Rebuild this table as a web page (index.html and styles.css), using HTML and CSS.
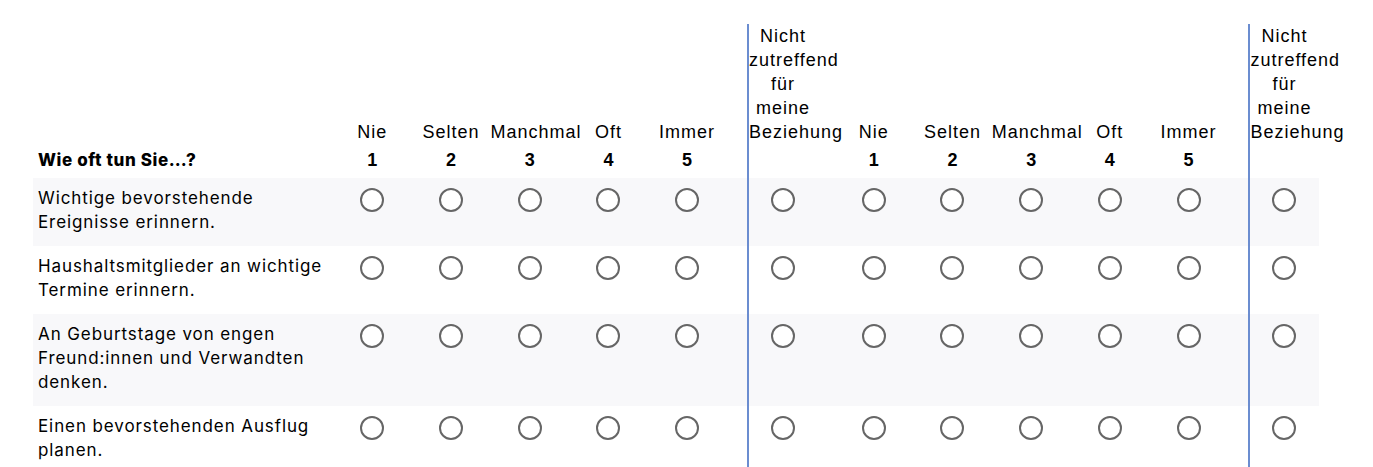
FILE: index.html
```html
<!DOCTYPE html>
<html lang="de">
<head>
<meta charset="utf-8">
<title>Wie oft tun Sie…?</title>
<link rel="stylesheet" href="styles.css">
</head>
<body>
<div class="page">
<table class="matrix">
  <colgroup>
    <col class="c-q">
    <col class="c-opt"><col class="c-opt"><col class="c-opt"><col class="c-opt"><col class="c-opt">
    <col class="c-gap">
    <col class="c-na">
    <col class="c-sep">
    <col class="c-opt"><col class="c-opt"><col class="c-opt"><col class="c-opt"><col class="c-opt">
    <col class="c-gap">
    <col class="c-na">
  </colgroup>
  <thead>
    <tr>
      <th class="q-head">Wie oft tun Sie…?</th>
      <th class="opt-head"><div class="lbl">Nie</div><div class="num">1</div></th>
      <th class="opt-head"><div class="lbl">Selten</div><div class="num">2</div></th>
      <th class="opt-head"><div class="lbl">Manchmal</div><div class="num">3</div></th>
      <th class="opt-head"><div class="lbl">Oft</div><div class="num">4</div></th>
      <th class="opt-head"><div class="lbl">Immer</div><div class="num">5</div></th>
      <th class="gap"></th>
      <th class="opt-head na"><div class="lbl">Nicht zutreffend für meine Beziehung</div><div class="num">&nbsp;</div></th>
      <th class="sep"></th>
      <th class="opt-head"><div class="lbl">Nie</div><div class="num">1</div></th>
      <th class="opt-head"><div class="lbl">Selten</div><div class="num">2</div></th>
      <th class="opt-head"><div class="lbl">Manchmal</div><div class="num">3</div></th>
      <th class="opt-head"><div class="lbl">Oft</div><div class="num">4</div></th>
      <th class="opt-head"><div class="lbl">Immer</div><div class="num">5</div></th>
      <th class="gap"></th>
      <th class="opt-head na"><div class="lbl">Nicht zutreffend für meine Beziehung</div><div class="num">&nbsp;</div></th>
    </tr>
  </thead>
  <tbody>
    <tr class="alt">
      <td class="q">Wichtige bevorstehende Ereignisse erinnern.</td>
      <td class="r"><input type="radio" name="a1"></td>
      <td class="r"><input type="radio" name="a1"></td>
      <td class="r"><input type="radio" name="a1"></td>
      <td class="r"><input type="radio" name="a1"></td>
      <td class="r"><input type="radio" name="a1"></td>
      <td class="gap"></td>
      <td class="r na"><input type="radio" name="a1"></td>
      <td class="sep"></td>
      <td class="r"><input type="radio" name="b1"></td>
      <td class="r"><input type="radio" name="b1"></td>
      <td class="r"><input type="radio" name="b1"></td>
      <td class="r"><input type="radio" name="b1"></td>
      <td class="r"><input type="radio" name="b1"></td>
      <td class="gap"></td>
      <td class="r na"><input type="radio" name="b1"></td>
    </tr>
    <tr>
      <td class="q">Haushaltsmitglieder an wichtige Termine erinnern.</td>
      <td class="r"><input type="radio" name="a2"></td>
      <td class="r"><input type="radio" name="a2"></td>
      <td class="r"><input type="radio" name="a2"></td>
      <td class="r"><input type="radio" name="a2"></td>
      <td class="r"><input type="radio" name="a2"></td>
      <td class="gap"></td>
      <td class="r na"><input type="radio" name="a2"></td>
      <td class="sep"></td>
      <td class="r"><input type="radio" name="b2"></td>
      <td class="r"><input type="radio" name="b2"></td>
      <td class="r"><input type="radio" name="b2"></td>
      <td class="r"><input type="radio" name="b2"></td>
      <td class="r"><input type="radio" name="b2"></td>
      <td class="gap"></td>
      <td class="r na"><input type="radio" name="b2"></td>
    </tr>
    <tr class="alt">
      <td class="q">An Geburtstage von engen Freund:innen und Verwandten denken.</td>
      <td class="r"><input type="radio" name="a3"></td>
      <td class="r"><input type="radio" name="a3"></td>
      <td class="r"><input type="radio" name="a3"></td>
      <td class="r"><input type="radio" name="a3"></td>
      <td class="r"><input type="radio" name="a3"></td>
      <td class="gap"></td>
      <td class="r na"><input type="radio" name="a3"></td>
      <td class="sep"></td>
      <td class="r"><input type="radio" name="b3"></td>
      <td class="r"><input type="radio" name="b3"></td>
      <td class="r"><input type="radio" name="b3"></td>
      <td class="r"><input type="radio" name="b3"></td>
      <td class="r"><input type="radio" name="b3"></td>
      <td class="gap"></td>
      <td class="r na"><input type="radio" name="b3"></td>
    </tr>
    <tr>
      <td class="q">Einen bevorstehenden Ausflug planen.</td>
      <td class="r"><input type="radio" name="a4"></td>
      <td class="r"><input type="radio" name="a4"></td>
      <td class="r"><input type="radio" name="a4"></td>
      <td class="r"><input type="radio" name="a4"></td>
      <td class="r"><input type="radio" name="a4"></td>
      <td class="gap"></td>
      <td class="r na"><input type="radio" name="a4"></td>
      <td class="sep"></td>
      <td class="r"><input type="radio" name="b4"></td>
      <td class="r"><input type="radio" name="b4"></td>
      <td class="r"><input type="radio" name="b4"></td>
      <td class="r"><input type="radio" name="b4"></td>
      <td class="r"><input type="radio" name="b4"></td>
      <td class="gap"></td>
      <td class="r na"><input type="radio" name="b4"></td>
    </tr>
  </tbody>
</table>
</div>
</body>
</html>
```
FILE: styles.css
```css
html, body {
  margin: 0;
  padding: 0;
  background: #ffffff;
}

body {
  font-family: Inter, "Noto Sans", sans-serif;
  color: #000000;
}

.page {
  padding: 24px 0 0 33px;
}

.matrix {
  table-layout: fixed;
  border-collapse: collapse;
  border-spacing: 0;
  width: 1285.5px;
}

.c-q { width: 300px; }
.c-opt { width: 78.7px; }
.c-gap { width: 21.5px; }
.c-na { width: 69px; }
.c-sep { width: 17.5px; }

.matrix th,
.matrix td {
  padding: 0;
  font-weight: normal;
}

.matrix thead th {
  vertical-align: bottom;
  padding-bottom: 6px;
}

.matrix thead th.q-head {
  text-align: left;
  padding-left: 5px;
  font-family: Inter, sans-serif;
  font-weight: 800;
  font-size: 17px;
  letter-spacing: 0.6px;
  line-height: 24px;
}

.opt-head {
  text-align: center;
  font-family: "Liberation Sans", Arial, sans-serif;
  font-size: 18px;
  letter-spacing: 1px;
  white-space: normal;
}

.opt-head .lbl {
  line-height: 24px;
}

.opt-head .num {
  margin-top: 4px;
  line-height: 24px;
  font-weight: 700;
  letter-spacing: 0;
}

.na {
  border-left: 2px solid #6b8dd0;
}

.matrix tbody tr.alt {
  background: #f8f8fa;
}

.matrix tbody td {
  vertical-align: top;
  padding-top: 10px;
  padding-bottom: 10px;
}

.matrix tbody td.q {
  font-size: 17px;
  letter-spacing: 0.9px;
  line-height: 24px;
  padding: 8px 5px 12px 5px;
}

.r {
  text-align: center;
}

.r input[type="radio"] {
  appearance: none;
  -webkit-appearance: none;
  display: block;
  margin: 0 auto;
  width: 24px;
  height: 24px;
  box-sizing: border-box;
  border: 2px solid #666666;
  border-radius: 50%;
  background: #ffffff;
}
```
